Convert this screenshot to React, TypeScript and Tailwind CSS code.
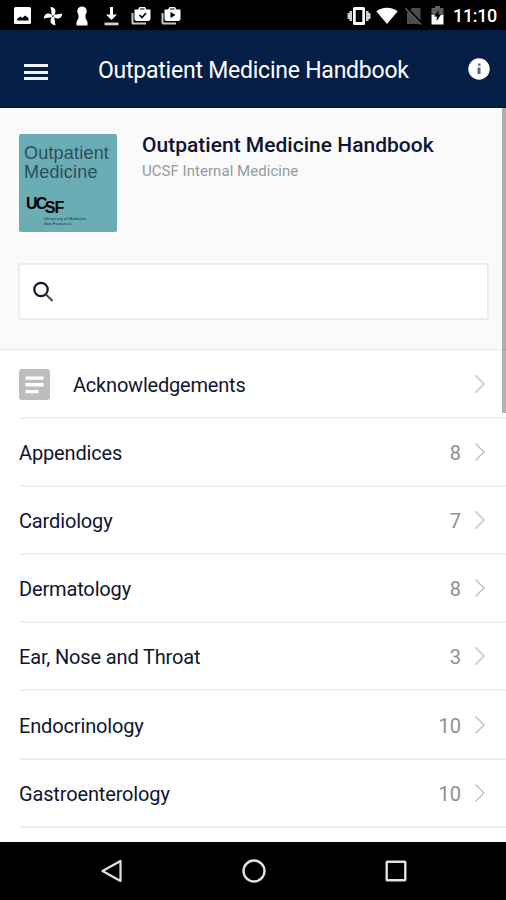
import type { ReactNode } from "react";

interface Chapter {
  title: string;
  count: number;
}

const chapters: Chapter[] = [
  { title: "Appendices", count: 8 },
  { title: "Cardiology", count: 7 },
  { title: "Dermatology", count: 8 },
  { title: "Ear, Nose and Throat", count: 3 },
  { title: "Endocrinology", count: 10 },
  { title: "Gastroenterology", count: 10 },
];

export default function App() {
  return (
    <div className="relative flex h-[900px] w-[506px] flex-col overflow-hidden bg-white font-['Roboto',sans-serif] text-[#10152f]">
      <StatusBar />
      <Header />
      <main className="relative flex flex-1 flex-col overflow-hidden">
        <BookInfo />
        <ChapterList />
        {/* Scroll indicator */}
        <div className="absolute top-0 right-0 h-[305px] w-1 bg-black/30" />
      </main>
      <NavigationBar />
    </div>
  );
}

function StatusBar() {
  return (
    <div className="flex h-[30px] shrink-0 items-center justify-between bg-black pt-px pr-[9px] pl-[14px] text-white">
      <div className="flex items-center">
        {/* Image */}
        <svg className="h-[17px] w-[17px]" viewBox="0 0 17 17" fill="currentColor">
          <path fillRule="evenodd" d="M1.5 0h14A1.5 1.5 0 0 1 17 1.500v14a1.500 1.500 0 0 1-1.500 1.500h-14A1.500 1.500 0 0 1 0 15.500v-14A1.500 1.500 0 0 1 1.500 0zM3 13.500h11.500v-2.500L11 8.500l-2.800 2.500-2-1.500L3 12z" />
        </svg>
        {/* Pinwheel */}
        <svg className="ml-3 h-5 w-5" viewBox="0 0 20 20" fill="currentColor">
          <path d="M9 10L7.500.7Q13 1.500 12.500 6L11 10z" />
          <path d="M10 9l9.300-1.500Q18.500 13 14 12.500L10 11z" />
          <path d="M11 10l1.500 9.300Q7 18.500 7.500 14L9 10z" />
          <path d="M10 11L.7 12.500Q1.500 7 6 7.500L10 9z" />
          <circle cx="10" cy="10" r=".9" fill="#333" />
        </svg>
        {/* Keyhole */}
        <svg className="ml-[13px] h-5 w-3" viewBox="0 0 12 20" fill="currentColor">
          <path d="M6 .5a5 5 0 0 1 3.500 8.400v3l2 4V19.500H.5v-3.600l2-4v-3A5 5 0 0 1 6 .5z" />
        </svg>
        {/* Download */}
        <svg className="ml-4 h-5 w-[15px]" viewBox="0 0 15 20" fill="currentColor">
          <path d="M6 1h3v7.500h4L7.500 14 2 8.500h4z" />
          <path fill="#d0d0d0" d="M.5 16.500h14v2.800H.5z" />
        </svg>
        <BagIcon className="ml-3">
          <path d="M8.500 9l2.500 2.500 4-4.500" fill="none" stroke="#000" strokeWidth="1.600" />
        </BagIcon>
        <BagIcon className="ml-[10px]">
          <path d="M9.500 6l5 3-5 3z" fill="#000" />
        </BagIcon>
      </div>
      <div className="flex items-center">
        {/* Vibrate */}
        <svg className="h-5 w-6" viewBox="0 0 24 20" fill="currentColor">
          <path fill="#cfcfcf" d="M.5 7h2v6h-2zM2.500 5h2.500v10H2.500zM21.500 7h2v6h-2zM19 5h2.500v10H19z" />
          <path fillRule="evenodd" d="M7.500 1h9A1.500 1.500 0 0 1 18 2.500v15a1.500 1.500 0 0 1-1.500 1.500h-9A1.500 1.500 0 0 1 6 17.500v-15A1.500 1.500 0 0 1 7.500 1zM8.700 4v12h6.600V4z" />
        </svg>
        {/* Wi-Fi */}
        <svg className="ml-[5px] h-[18px] w-[22px]" viewBox="0 0 22 18" fill="currentColor">
          <path d="M11 17L.3 4.300C3 2 7 .8 11 .8s8 1.200 10.700 3.500z" />
        </svg>
        {/* No SIM */}
        <svg className="ml-[7px] h-[18px] w-[18px]" viewBox="0 0 18 18">
          <path fill="#4c4c4c" d="M7 1h8.500v16H2V6z" />
          <path d="M1 .5L17 17.500" stroke="#000" strokeWidth="3" />
          <path d="M.5 1.500L16 17.500" stroke="#666" strokeWidth="1.500" />
        </svg>
        {/* Battery */}
        <svg className="ml-2 h-[19px] w-[13px]" viewBox="0 0 13 19">
          <path fill="#606060" d="M4 0h5v2h3.500v8H.5V2H4z" />
          <path fill="#fff" d="M.5 9h12v9.500H.5z" />
          <path fill="#000" d="M7.500 4L3 10.500h2.700V15L10 8.500H7.500z" />
        </svg>
        <span className="ml-[9px] w-[44px] text-[18px] leading-[30px] font-medium tracking-[-0.35px]">11:10</span>
      </div>
    </div>
  );
}

function BagIcon({ className, children }: { className: string; children: ReactNode }) {
  return (
    <svg className={`h-5 w-5 ${className}`} viewBox="0 0 20 20" fill="currentColor">
      <path fill="#c8c8c8" d="M.5 7h2v9.500H15v2H2a1.500 1.500 0 0 1-1.500-1.500z" />
      <path fillRule="evenodd" d="M8.500 1h5.500L15.500 3.500h4V13.500L18 15H5L3.500 13.500v-10H7zM9 2.500v1h4.500v-1z" />
      {children}
    </svg>
  );
}

function Header() {
  return (
    <header className="flex h-[78px] shrink-0 items-center border-b border-[#02123a] bg-[#051e46] pr-4 pl-6 text-white">
      <button className="mt-[7px] flex w-6 flex-col gap-[3.500px]" aria-label="Menu">
        <span className="h-[3px] w-full bg-[#f2f2f5]" />
        <span className="h-[3px] w-full bg-[#f2f2f5]" />
        <span className="h-[3px] w-full bg-[#f2f2f5]" />
      </button>
      <h1 className="mt-[5px] ml-[50px] text-[23px] leading-8 tracking-[-0.23px] whitespace-nowrap">Outpatient Medicine Handbook</h1>
      <svg className="ml-auto h-[22px] w-[22px]" viewBox="0 0 22 22">
        <circle cx="11" cy="11" r="10.700" fill="#fff" />
        <path fill="#59647f" d="M10 5.500h2.500v2.300H10zM9.500 9.500h3v6.500h-3z" />
      </svg>
    </header>
  );
}

function BookInfo() {
  return (
    <section className="h-[242px] shrink-0 border-b border-[#e9e9e9] bg-[#fafafa] pt-[26px] pr-[17px] pl-[18px]">
      <div className="flex">
        <BookCover />
        <div className="ml-[25px]">
          <h2 className="text-[21px] leading-[23px] font-medium tracking-[0.01px] whitespace-nowrap">Outpatient Medicine Handbook</h2>
          <p className="mt-[5px] text-[15px] leading-[18px] tracking-[0.04px] text-[#959b9f]">UCSF Internal Medicine</p>
        </div>
      </div>
      <div className="mt-[31px] flex h-[57px] items-center rounded-[3px] border-2 border-[#ededed] bg-white pl-3">
        <svg className="h-6 w-6" viewBox="0 0 24 24" fill="none">
          <circle cx="9" cy="9.500" r="6.700" stroke="#10152f" strokeWidth="2.200" />
          <path d="M14 14.500l6.500 6.500" stroke="#4b4e59" strokeWidth="2.300" />
        </svg>
      </div>
    </section>
  );
}

function BookCover() {
  return (
    <div className="ml-px h-[98px] w-[98px] shrink-0 overflow-hidden rounded-[2px] bg-[#6badb4] pt-[10px] pl-[5px] font-['Liberation_Sans',sans-serif] text-[#2b4f5b]">
      <p className="text-[18px] leading-[19px] tracking-[0.2px]">Outpatient</p>
      <p className="text-[18px] leading-[19px] tracking-[0.2px]">Medicine</p>
      <div className="mt-[13px] ml-[2px] flex h-[21px] text-[16px] leading-[18px] font-bold tracking-[-1.700px] text-black">
        <span>UC</span>
        <span className="relative top-1 -left-px text-[16px] tracking-[-1px]">SF</span>
      </div>
      <div className="ml-5 text-[4.300px] leading-[5px] whitespace-nowrap text-[#173039]">
        <p>University of Medicine</p>
        <p>San Francisco</p>
      </div>
    </div>
  );
}

function ChapterList() {
  return (
    <ul className="pt-px pl-[19px] text-[20px]">
      <li className="flex h-[68.100px] items-center border-b-2 border-[#f0f0f0] pr-5">
        <svg className="h-[31px] w-[31px]" viewBox="0 0 31 31">
          <rect width="31" height="31" rx="3" fill="#bdbdbd" />
          <path fill="#fff" d="M6.500 7.500h18v3.300h-18zM6.500 14h18v3.500h-18zM6.500 21h13v3.300h-13z" />
        </svg>
        <span className="mt-0.5 ml-[23px] tracking-[-0.2px]">Acknowledgements</span>
        <ChevronIcon className="ml-auto" />
      </li>
      {chapters.map((chapter) => (
        <li key={chapter.title} className="flex h-[68.100px] items-center border-b-2 border-[#f0f0f0] pr-5">
          <span className="mt-0.5 tracking-[-0.15px]">{chapter.title}</span>
          <span className="mt-0.5 ml-auto text-[#8f8f8f]">{chapter.count}</span>
          <ChevronIcon className="ml-[14px]" />
        </li>
      ))}
    </ul>
  );
}

function ChevronIcon({ className }: { className: string }) {
  return (
    <svg className={`h-[18px] w-[11px] ${className}`} viewBox="0 0 11 18" fill="none" stroke="#bcbcbc" strokeWidth="1.300">
      <path d="M.5.5L9 9 .5 17.500" />
    </svg>
  );
}

function NavigationBar() {
  return (
    <nav className="flex h-[58px] shrink-0 items-center justify-between bg-black pr-[99px] pl-[100px] text-[#e2e2e2]">
      <svg className="h-6 w-[23px]" viewBox="0 0 23 24" fill="none" stroke="currentColor" strokeWidth="2.200">
        <path d="M20.500 2v20L2.500 12z" strokeLinejoin="round" />
      </svg>
      <svg className="h-6 w-6" viewBox="0 0 24 24" fill="none" stroke="currentColor" strokeWidth="2.400">
        <circle cx="12" cy="12" r="10.500" />
      </svg>
      <svg className="h-[22px] w-[22px]" viewBox="0 0 22 22" fill="none" stroke="currentColor" strokeWidth="2.400">
        <rect x="1.700" y="1.700" width="18.600" height="18.600" rx=".5" />
      </svg>
    </nav>
  );
}
